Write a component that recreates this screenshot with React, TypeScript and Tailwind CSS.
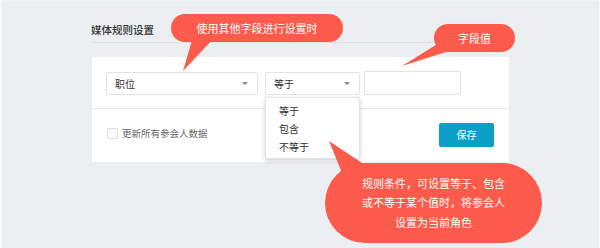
import React from 'react';

const cjk = { fontFamily: '"Noto Sans CJK SC", "Noto Sans", sans-serif' };

const Caret = () => (
  <svg width="6" height="3" viewBox="0 0 6 3" className="shrink-0">
    <polygon points="0,0 6,0 3,3" fill="#8a8a8a" />
  </svg>
);

const Select: React.FC<{ value: string; className: string }> = ({ value, className }) => (
  <div className={`h-[23px] bg-white border border-[#e3e3e3] rounded-[2px] flex items-center justify-between pl-[8px] pr-[9px] text-[10px] text-[#333] ${className}`}>
    <span>{value}</span>
    <Caret />
  </div>
);

export default function App() {
  return (
    <div
      style={cjk}
      className="relative w-[600px] h-[248px] overflow-hidden bg-[#ebeff2] border-t border-t-[#f3f4f5] border-l-2 border-l-[#f6f8f9] border-r border-r-[#f6f8f9]"
    >
      <div className="flex flex-col pl-[89px] pt-[16px]">
        <div className="w-[418px] h-[26px] border-b border-[#dde1e5] flex items-center text-[10.5px] font-medium text-[#333]">
          媒体规则设置
        </div>

        <div className="mt-[14px] ml-[1px] w-[417px] bg-white flex flex-col">
          <div className="h-[52px] border-b border-[#e8ebee] flex items-start pt-[15px] pl-[14px]">
            <Select value="职位" className="w-[152px]" />
            <div className="relative ml-[7px]">
              <Select value="等于" className="w-[95px]" />
              <div className="absolute left-0 top-[25px] w-[95px] h-[62px] bg-white border border-[#e3e3e3] rounded-[2px] shadow-[0_2px_5px_rgba(0,0,0,0.18)] flex flex-col pl-[13px] pt-[4px] text-[10px] text-[#333] leading-[18px] z-10">
                <span>等于</span>
                <span>包含</span>
                <span>不等于</span>
              </div>
            </div>
            <div className="ml-[4px] -mt-[1px] w-[97px] h-[24px] border border-[#e3e3e3] rounded-[2px] bg-white" />
          </div>

          <div className="h-[53px] flex items-center justify-between pl-[15px] pr-[15px]">
            <div className="flex items-center gap-[4px] -mt-[4px]">
              <div className="w-[11px] h-[11px] border border-[#e2e2e2] bg-[#fafafa] rounded-[1px]" />
              <span className="text-[9.5px] text-[#666]">更新所有参会人数据</span>
            </div>
            <button className="w-[55px] h-[24px] bg-[#0a9fc7] rounded-[2px] text-white text-[10px] -mt-[2px]">
              保存
            </button>
          </div>
        </div>
      </div>

      {/* callout tails */}
      <svg className="absolute left-0 top-0 pointer-events-none z-20" width="600" height="248">
        <polygon points="191,36 213,36 181,70" fill="#fc5a4b" />
        <polygon points="400,65 437,42 447,50" fill="#fc5a4b" />
        <polygon points="327,140 340,172 366,166" fill="#fc5a4b" />
      </svg>

      <div className="absolute left-[169px] top-[13px] w-[172px] h-[28px] rounded-full bg-[#fc5a4b] text-white text-[11px] flex items-center justify-center z-20">
        使用其他字段进行设置时
      </div>
      <div className="absolute left-[432px] top-[23px] w-[81px] h-[28px] rounded-full bg-[#fc5a4b] text-white text-[11px] flex items-center justify-center z-20">
        字段值
      </div>
      <div className="absolute left-[323px] top-[162px] w-[217px] h-[80px] rounded-full bg-[#fc5a4b] text-white text-[11px] leading-[19.5px] flex flex-col items-center justify-center z-20">
        <span>规则条件，可设置等于、包含</span>
        <span>或不等于某个值时，将参会人</span>
        <span>设置为当前角色</span>
      </div>
    </div>
  );
}
